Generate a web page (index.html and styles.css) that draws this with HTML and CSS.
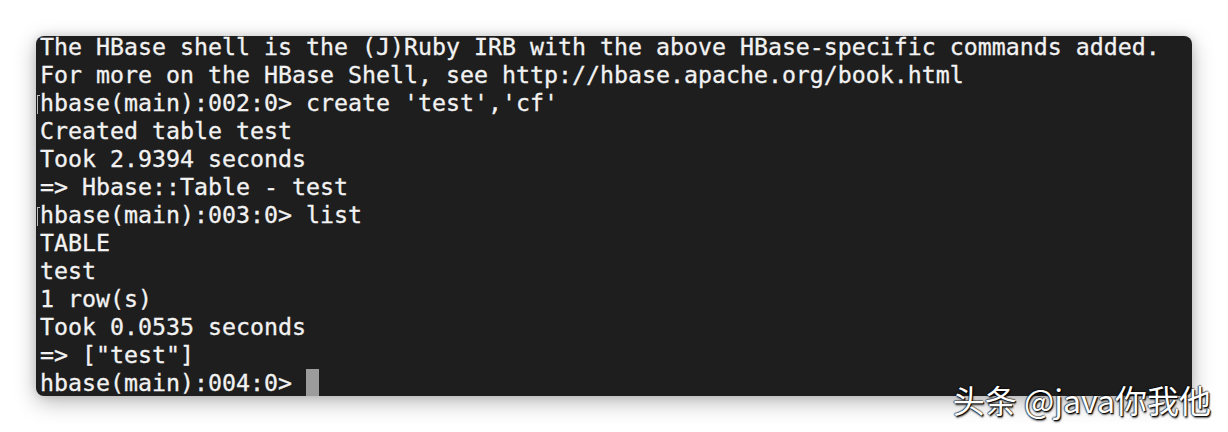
FILE: index.html
```html
<!DOCTYPE html>
<html lang="en">
<head>
<meta charset="utf-8">
<title>HBase shell</title>
<link rel="stylesheet" href="styles.css">
</head>
<body>
<div class="stage">
  <div class="terminal">
    <div class="lines">
      <div class="line">The HBase shell is the (J)Ruby IRB with the above HBase-specific commands added.</div>
      <div class="line">For more on the HBase Shell, see http://hbase.apache.org/book.html</div>
      <div class="line mark">hbase(main):002:0&gt; create 'test','cf'</div>
      <div class="line">Created table test</div>
      <div class="line">Took 2.9394 seconds</div>
      <div class="line">=&gt; Hbase::Table - test</div>
      <div class="line mark">hbase(main):003:0&gt; list</div>
      <div class="line">TABLE</div>
      <div class="line">test</div>
      <div class="line">1 row(s)</div>
      <div class="line">Took 0.0535 seconds</div>
      <div class="line">=&gt; ["test"]</div>
      <div class="line">hbase(main):004:0&gt; <span class="cursor"></span></div>
    </div>
  </div>
  <div class="watermark">头条 @java你我他</div>
</div>
</body>
</html>
```

FILE: styles.css
```css
html, body {
  margin: 0;
  padding: 0;
  background: #ffffff;
}

.stage {
  position: relative;
  width: 1228px;
  height: 432px;
  padding: 36px 0 0 36px;
  box-sizing: border-box;
  overflow: hidden;
}

.terminal {
  width: 1156px;
  height: 360px;
  background: #1e1e1e;
  border-radius: 8px;
  overflow: hidden;
  box-shadow: 0 6px 22px rgba(0, 0, 0, 0.28), 0 0 10px rgba(0, 0, 0, 0.12);
}

.lines {
  padding-left: 4px;
  font-family: "DejaVu Sans Mono", "Liberation Mono", monospace;
  font-size: 23.25px;
  line-height: 28px;
  color: #f2f2f2;
  -webkit-text-stroke: 0.3px #f2f2f2;
}

.line {
  position: relative;
  height: 28px;
  white-space: pre;
}

.line:first-child {
  height: 25px;
  line-height: 22px;
}

.mark::before {
  content: "";
  position: absolute;
  left: -3px;
  top: 6px;
  width: 2px;
  height: 18px;
  border-left: 1px solid #bdbdbd;
  border-top: 1px solid #bdbdbd;
}

.cursor {
  display: inline-block;
  width: 13px;
  height: 29px;
  vertical-align: top;
  background: #9c9c9c;
}

.watermark {
  position: absolute;
  right: 17px;
  top: 379px;
  font-family: "Noto Sans CJK SC", "Noto Sans", sans-serif;
  font-size: 32px;
  line-height: 40px;
  color: #ffffff;
  text-shadow: 1px 1px 1px #000, -1px 0 1px rgba(0,0,0,0.6), 0 -1px 1px rgba(0,0,0,0.5), 1px 2px 2px rgba(0,0,0,0.6);
}
```
